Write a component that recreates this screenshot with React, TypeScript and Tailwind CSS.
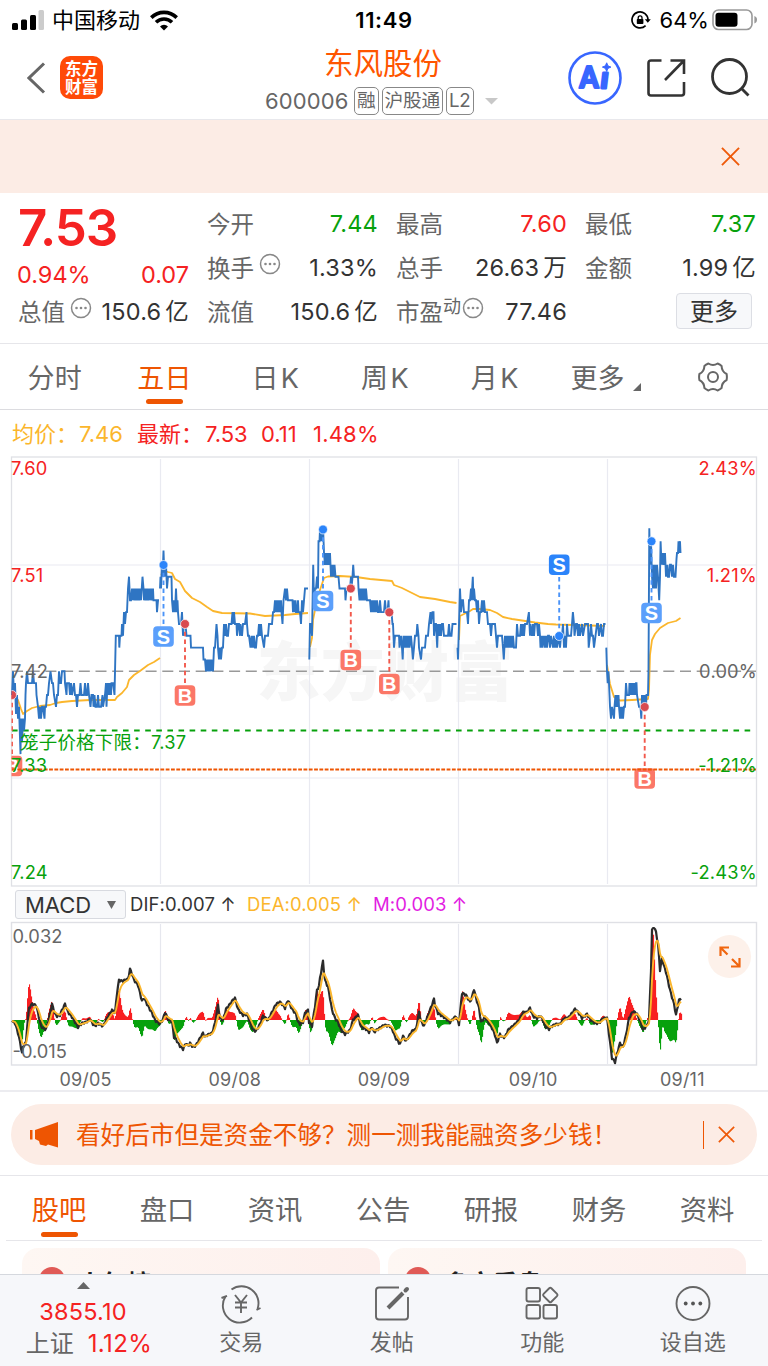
import React from 'react';

type Point = [number, number];

const GRID_X = [160.5, 309.5, 458.5, 607.5];
const BASE_Y = 671.3;
const CENT = 11.83;

// x,cents away from the 7.42 base, one string per trading day
const PRICE_DAYS = [
    '12,-2 13,0 14,-2 15,-1 16,-3.6 17,-2 18,-4 19,-3 20.5,-7 21,-4 22,-6 23,-4 24,-5 25,-4 25.5,-2 26,-1 27,0 28,-1 32,-1 33,0 34,-1 36,-1 36.5,-2 38,-3 39,-4 40,-3 41,-4 42,-3 43,-3 44.5,-4 45,-3 46,-3 47,-2 48,-2 49,-1 50.5,0 52,-1 53,-1 54,-2 56,-3 57,-2 58,-2 59,0 60,-1 61,-1 62,0 64.5,0 65,-1 66.5,-2 67,-1 69,-1 70,-2 71,-1 72,-2 74,-1 75,-2 76,-2 77,-3 78,-2 79.5,-2 80.5,-1 81.5,-2 84,-2 85,-1 86,-2 87,-2 88,-1 89,-2 90.5,-3 91.5,-2 93,-2 93.5,-3 94.5,-2 95.5,-3 97,-3 98,-2 99,-3 101,-3 102.5,-2 103,-3 105,-2 106,-1 106.5,-3 107,-2 108,-1 109,-2 110,-1 111,-2 111.5,-1 113,-1 114.5,-2 115.8,3 119,3 119.3,2 120,3 121.5,3 122,4 123,3 124,5 125,4 126,5 127,5 128,7 129,8 130,6 131,6 132,7 132.5,6 133,7 133.5,6 134.5,7 135,6 136,7 136.5,6 137.5,7 138,6 139,7 139.5,6 140.5,7 141,6 142.5,8 143.5,7 144,6 145,7 145.5,6 146.5,7 147,6 148,7 148.5,6 150,7 150.5,6 151.5,7 152,6 153,7 153.5,6 156.5,6 157,5 158,6 159,6',
    '160,7 160.5,8 161,7 161.5,8 162,9 162.5,8 163,9 163.5,10.2 164,9 164.5,8 166,9 166.5,8 167,7 168,8 171.5,8 172,6 173,5 174,6 175,5 176,7 177,5 177.5,6 178,5 179,4 181,4 182,5 183,3 184,4 185.5,4 186.5,3 190.5,3 191,2 203,2 203.5,1 205,1 206,0 207,1 208,0 208.5,1 209.5,0 210,1 211,0 211.5,1 213,0 213.5,1 214,2 215,2 216.5,4 217.5,3 218,2 219,1 220,2 221,1 222,2 223,2 224,4 225,3 226,4 227,3 228,3 229,4 230,4 231.5,4 232.5,5 233,4 234,5 235,4 236.5,4 237,3 238,4 239,4 240,3 240.5,4 242,3 243,4 245,4 246.5,5 247,4 248,3 249,3 250.5,2 251.5,3 252,2 252.5,3 253.5,2 254,3 255,2 256,2 257,3 258,3 259,4 260,3 261,4 262,3 264,2 265,3 268,3 269,4 272,4 273,5 274,5 275,6 275.5,5 276.5,6 277,5 278,6 278.5,5 279.5,6 280,5 281,6 281.5,5 282.5,4 283.5,6 285,7 286,6 287,7 288,6 292.5,6 293,5 294,6 294.5,5 295.5,6 296,5 297,5 298,6 298.5,5 300,5 301,4 302,6 303,5 304,6 305,7 308,7',
    '309.3,1 310,4 311,4 312,3 313.2,9 314,6 315,7 316,7 317,8 318,7 318.5,11 319.5,11 320,12 320.5,11 321.5,12 322,11 323,12.3 324,10 325,9 325.5,10 326.5,9 327,10 328,9 328.5,10 329.5,9 330,10 331,8 331.5,9 332.5,8 333,9 334,8 334.5,9 335.5,8 337,8 338.5,8 339.5,7 345,7 345.5,6 346.5,7 350,7 351,8 351.5,7 352.5,8 353.2,9 354,8 358,8 358.5,7 359.5,6 360,7 361,6 361.5,7 362.5,6 363,7 364,6 364.5,7 365.5,6 366,7 367,6 370,6 371,5 372,6 373,5 373.5,6 374.5,5 375,6 376,5 377,6 378,5 379,5 380,6 381,5 384,5 385,6 386,5 387.5,5 388.5,6 389,5 391.5,5 392.5,4 393,4 394,2 395,3 399,3 399.5,2 401,3 402,2 402.7,1 403.5,3 404,2 405,3 406,2 407,3 408,2 409,3 409.5,2 411,3 412,2 412.9,1 414,2 415,3 416.5,3 417.3,4 418.5,3 419,2 421,1 422,2 425,2 426,3 428,3 429,4 430.5,5 431,4 432.5,5 433.5,5 434,3 435,4 436,4 437.2,2 438,4 439,3 440,4 441,3 442,4 443,4 444,3 448,3 449,4 450,3 451.5,3 452.5,4 456.5,4',
    '457.5,2 458,1 459,4 460,7 461,5 462,6 463,6 464,5 467,5 468,4 469,6 470,6 471,7 471.5,6 472.8,8 473.5,6 474,7 475,6 476,6 477,5 478,6 479,4 480,5 481,5 482,6 483,5 484,6 485,5 486,5 487,5 488,4 490,4 491,3 492,4 495,4 496,3 497,2 498,3 502,3 503,2 503.8,1 505,3 506,2 507,3 508,2 509,3 510,2 511,3 512,2 513,3 514,2 516,2 517,4 518,3 520,3 521,4 522,3 523,4 524,3 525,4 527,4 528.9,5 530,3 530.5,4 532,3 533,4 534,3 535,4 537,4 538,3 539,4 540,3 540.5,2 542,3 542.5,2 544,3 545,2 546,3 547,2 548,3 549,3 550,2 551,3 553,2 554,3 555,2 556,3 557,2 559,3 560,2 561,3 562,3 563,4 564,2 565,3 566,2 567,4 568,3 571,3 572,4 572.9,5 574,4 574.5,3 576,4 577,4 578,3 579,4 580,3 582,4 583,3 585,4 588,4 588.7,2 590,3 591,4 592,3 593,3 594,2 595.5,3 597,4 598,4 599,3 601,4 602,3 603,3 604,4 605.5,4',
    '606.3,2 607,0 607.7,-1 608.5,0 609,-1 610,-3 611,-4 612,-3 614,-4 614.5,-3 615.5,-2 616,-3 617,-2 618,-3 618.5,-2 619,-3 620,-4 621,-3 621.5,-4 622.5,-3 623,-4 624,-3 625,-3 626,-1 627,-2 628,-2 629,-2 629.5,-1 630.5,-2 631,-1 632,-2 632.5,-1 633.5,-2 634,-1 635,-2 636,-1 636.5,-1 637,-2 639,-3 640.5,-3 641.3,-4 642,-2 643,-3 643.5,-2 644.5,-3 645,-2 646,-3 646.5,-2 648,-2 648.5,0 649.3,12.1 650,9 651,11 652,8 653,7 653.5,9 654.5,7 655,9 656,7 657,9 658,8 659.2,6 660,8 660.6,11 661.5,9 662,10 662.5,9 663.5,10 664,9 665,10 665.5,9 666,8 667.5,9 668,8 669,8 670,9 671,9 672,8 673,9 674,8 675.5,8 676.5,9.5 677,10 678,10 678.5,11 679,10 680,11 680.5,10',
];

const AVERAGE_DAYS = [
    '14,695 18,700 21,709 23,714 27,711 32,708 40,706 50,705 56,703 62,702 72,701 90,700 115,700 117,697 122,693 127,687 129,680 134,675 140,671 148,665 154,662 160,658',
    '161,575 165,571 168,572 172,573 175,579 180,582 185,591 192,598 200,602 207,607 213,611 222,613 250,613.5 265,616 285,615 295,614 308,613',
    '310,647 312,638 313,620 316,605 320,590 324,578 328,576.5 340,576 356,577 370,579 392,581 394,585 402,588 410,592 420,597 435,599 450,602 456.5,603',
    '459,640 460,616 464,614 470,611 473,609 480,609 490,610 497,613 503,617 512,619 522,620.5 535,622.5 548,624 556,624.5 575,625 605,626',
    '607,665 610,684 614,697 620,700.5 632,700 648,699 649,690 650,655 652,640 655,634 660,628 668,623 676,621 680.5,618',
];

const DIF =
    '12,1021 15,1023 18,1033 20,1042 22,1053 23,1047 26,1042 27,1028 29,1008 32,1004 36,1005 38,1013 41,1026 44,1029 46,1029 49,1018 52,1004 55,1014 57,1016 60,1015 62,1010 65,1004 68,1012 72,1017 75,1022 78,1027 82,1023 86,1022 90,1019 93,1024 95,1026 98,1023 103,1026 105,1022 107,1018 112,1010 115,1013 117,993 119,980 122,981 128,979 130,969 132,974 134,980 138,985 142,1001 144,998 148,1006 152,1013 155,1020 160,1024 163,1019 165,1012 168,1019 172,1021 174,1037 176,1039 178,1043 180,1046 183,1049 186,1043 188,1046 190,1043 193,1047 196,1045 200,1038 203,1033 205,1037 207,1035 212,1033 215,1023 218,1005 220,1018 223,1020 226,1009 230,1004 232,1001 235,998 238,1009 241,1013 243,1015 247,1014 251,1025 253,1030 256,1031 260,1024 263,1016 268,1020 272,1012 276,1004 280,1002 282,1004 285,1008 288,1000 292,1009 296,1014 298,1022 300,1024 303,1022 305,1013 308,1010 309,1022 312,1026 315,1006 317,990 319,986 320,978 323,961 324,972 325,980 328,987 330,998 332,1010 335,1018 338,1022 341,1030 345,1034 350,1030 353,1020 358,1015 361,1027 366,1029 369,1032 372,1027 374,1032 378,1029 384,1025 390,1026 393,1031 395,1037 400,1044 403,1036 406,1041 412,1031 416,1029 419,1012 421,1021 424,1026 427,1018 430,1010 434,999 435,1005 438,1013 444,1017 450,1022 456,1016 459,1024 461,1003 462,993 466,995 470,1002 472,997 474,989 476,998 479,1008 481,1022 485,1017 489,1023 492,1028 495,1035 497,1043 500,1034 502,1037 505,1037 508,1030 514,1025 519,1020 523,1012 527,1012 530,1008 533,1016 537,1018 540,1016 542,1018 545,1026 549,1029 552,1026 556,1024 560,1024 564,1018 568,1018 572,1013 575,1009 578,1012 582,1018 587,1014 590,1019 595,1023 599,1023 603,1018 607,1018 609,1034 612,1058 615,1062 618,1050 620,1043 623,1047 626,1035 629,1018 633,1011 637,1014 641,1023 643,1030 647,1025 649,1020 651,970 652,930 654,927 656,932 658,944 660,970 662,958 664,966 666,972 670,990 674,1004 676,1015 679,1000 681,999';

const parse = (s: string): Point[] => s.split(' ').map((p) => p.split(',').map(Number) as Point);

const pricePoints = (day: string) =>
    parse(day)
        .map(([x, c]) => `${x},${(BASE_Y - c * CENT).toFixed(1)}`)
        .join(' ');

const sampleLine = (points: Point[]): Point[] => {
    const out: Point[] = [];
    let i = 0;
    for (let x = points[0][0]; x <= points[points.length - 1][0]; x++) {
        while (i < points.length - 2 && points[i + 1][0] < x) i++;
        const [x0, y0] = points[i];
        const [x1, y1] = points[i + 1];
        out.push([x, y0 + ((y1 - y0) * (x - x0)) / (x1 - x0)]);
    }
    return out;
};

const difSamples = sampleLine(parse(DIF));
const deaSamples: Point[] = [];
difSamples.forEach(([x, y], i) => {
    const prev = i === 0 ? y : deaSamples[i - 1][1];
    deaSamples.push([x, prev + (y - prev) * 0.3]);
});

const rawBars = difSamples.map(([, y], i) => (y - deaSamples[i][1]) * 2.3);
const bars = rawBars.map((b, i) => Math.max(-92, ((rawBars[i - 1] ?? b) + b * 2 + (rawBars[i + 1] ?? b)) / 4));

const tradeMarkers = [
    { type: 'B', x: 12, dot: 695, box: 766, strong: false },
    { type: 'S', x: 163.5, dot: 565, box: 636.5, strong: false },
    { type: 'B', x: 185, dot: 624, box: 695.5, strong: false },
    { type: 'S', x: 323, dot: 529.5, box: 601, strong: false },
    { type: 'B', x: 350.8, dot: 588.5, box: 660, strong: false },
    { type: 'B', x: 389.3, dot: 612.3, box: 684, strong: false },
    { type: 'S', x: 559.2, dot: 636, box: 564.7, strong: true },
    { type: 'S', x: 651.5, dot: 541.3, box: 613, strong: false },
    { type: 'B', x: 644.7, dot: 707, box: 778.5, strong: false },
];

const FONT = "font-['Inter','Noto_Sans_CJK_SC',sans-serif]";

const StatusBar = () => (
    <div className="flex h-10 items-center justify-between pr-[10px] pl-3 text-black">
        <div className="flex w-[300px] items-center">
            <svg width="33" height="20" viewBox="0 0 33 20">
                <rect x="0" y="13" width="6" height="7" rx="1.5" />
                <rect x="9" y="9.5" width="6" height="10.5" rx="1.5" />
                <rect x="18" y="5" width="6" height="15" rx="1.5" />
                <rect x="26.5" y="0" width="5.5" height="20" rx="1.5" fill="#cccccc" />
            </svg>
            <span className="ml-[7px] text-[22px] leading-10">中国移动</span>
            <svg className="ml-[10px]" width="28" height="21" viewBox="0 0 28 21" fill="none" stroke="#000" strokeWidth="3.6">
                <path d="M1.3 7.6a18 18 0 0 1 25.4 0" />
                <path d="M6 12.3a11.4 11.4 0 0 1 16 0" />
                <path d="M14 20.6l-4-4.2a5.8 5.8 0 0 1 8 0z" fill="#000" stroke="none" />
            </svg>
        </div>
        <span className="mr-[2px] text-[22px] font-semibold tracking-[0.6px]">11:49</span>
        <div className="flex w-[300px] items-center justify-end">
            <svg width="20" height="18" viewBox="0 0 20 18" fill="none" stroke="#000" strokeWidth="1.7">
                <path d="M14.6 14.6A8 8 0 1 1 17 9" />
                <path d="M13.8 8.2h6l-3 3.6z" fill="#000" stroke="none" />
                <rect x="5.8" y="8" width="6.6" height="5" rx="0.8" fill="#000" stroke="none" />
                <path d="M7.2 8.5V6.8a1.9 1.9 0 0 1 3.8 0v1.7" strokeWidth="1.3" />
            </svg>
            <span className="mr-[3px] ml-[9px] text-[22px]">64%</span>
            <svg width="46" height="22" viewBox="0 0 46 22">
                <rect x="1" y="1" width="39" height="19.5" rx="5.5" fill="none" stroke="#999" strokeWidth="1.6" />
                <rect x="3.5" y="3.7" width="22" height="14" rx="3" />
                <path d="M42.4 7v7.4c2-.7 2.6-2.2 2.6-3.7s-.6-3-2.6-3.7z" fill="#999" />
            </svg>
        </div>
    </div>
);

const Tag = ({ children }: { children: React.ReactNode }) => (
    <span className="flex h-[28px] shrink-0 items-center rounded-[5px] border-[1.5px] border-[#888] px-[2px] text-[18.7px] leading-none tracking-[-0.2px] whitespace-nowrap text-[#666]">
        {children}
    </span>
);

const Header = () => (
    <header className="flex h-20 items-start border-b border-[#e8e8ec] pr-[18px] pl-[27px]">
        <svg className="mt-[22px] shrink-0" width="19" height="32" viewBox="0 0 19 32" fill="none" stroke="#666" strokeWidth="3">
            <path d="M17 1.5L2 16l15 14.5" />
        </svg>
        <div className="mt-4 ml-[14px] flex h-[43px] w-[43px] shrink-0 flex-col items-center justify-center rounded-[10px] bg-[#ff4a08] text-[16.5px] leading-[18px] font-bold text-white">
            <span>东方</span>
            <span>财富</span>
        </div>
        <div className="ml-[162px] flex w-[240px] shrink-0 flex-col">
            <div className="ml-[59px] h-[46px] text-[29.5px] leading-[46px] text-[#ff5500]">东风股份</div>
            <div className="flex items-center gap-[3px] text-[#666]">
                <span className="mr-[2px] w-[84px] shrink-0 text-[22px] leading-[30px] tracking-[0.1px]">600006</span>
                <Tag>融</Tag>
                <Tag>沪股通</Tag>
                <Tag>L2</Tag>
                <svg className="ml-2 shrink-0" width="14" height="7" viewBox="0 0 14 7" fill="#c8c8c8">
                    <path d="M0 0h13L6.5 6.5z" />
                </svg>
            </div>
        </div>
        <div className="ml-auto flex shrink-0 items-center pt-[11px]">
            <svg className="-ml-px" width="54" height="54" viewBox="0 0 54 54" fill="#3866ff">
                <circle cx="27" cy="27" r="25.5" fill="none" stroke="#3866ff" strokeWidth="2.6" />
                <text x="11.5" y="37" fontSize="30" fontFamily="Lato" fontWeight="900" stroke="#3866ff" strokeWidth="2.2" strokeLinejoin="round" textLength="19" lengthAdjust="spacingAndGlyphs">A</text>
                <text x="33" y="37" fontSize="29" fontFamily="Lato" fontWeight="900" fontStyle="italic" stroke="#3866ff" strokeWidth="2.8" strokeLinejoin="round">ı</text>
                <path d="M38.7 11.8l1.2 3 3 1.3-3 1.3-1.2 3-1.3-3-3-1.3 3-1.3z" stroke="#3866ff" strokeLinejoin="round" />
            </svg>
            <svg className="ml-[24px]" width="40" height="40" viewBox="0 0 40 40" fill="none" stroke="#333" strokeWidth="2.6">
                <path d="M15.5 2.5H5Q2.5 2.5 2.5 5v30q0 2.5 2.5 2.5h30.5q2.5 0 2.5-2.5V24" />
                <path d="M24.5 2.5H38v13.5M38 2.5L19 22" />
            </svg>
            <svg className="ml-[24px]" width="40" height="40" viewBox="0 0 40 40" fill="none" stroke="#333" strokeWidth="2.8">
                <circle cx="19.5" cy="18.5" r="17" />
                <path d="M31 30l7.5 7.5" />
            </svg>
        </div>
    </header>
);

const CloseIcon = ({ size }: { size: number }) => (
    <svg width={size} height={size} viewBox="0 0 20 20" fill="none" stroke="#ee5a0a" strokeWidth="2">
        <path d="M1 1l18 18M19 1L1 19" />
    </svg>
);

const Dots = () => (
    <svg className="mb-2 ml-[5px] shrink-0" width="22" height="22" viewBox="0 0 22 22" fill="#888">
        <circle cx="11" cy="11" r="9.5" fill="none" stroke="#888" strokeWidth="1.5" />
        <circle cx="6.5" cy="11" r="1.3" />
        <circle cx="11" cy="11" r="1.3" />
        <circle cx="15.5" cy="11" r="1.3" />
    </svg>
);

type FieldProps = { label: string; value: string; unit?: string; color?: string; dots?: boolean; sup?: string };

const Field = ({ label, value, unit, color = 'text-[#333]', dots, sup }: FieldProps) => (
    <div className="flex h-11 items-center text-[23.5px] leading-[44px] whitespace-nowrap">
        <span className="mt-[2px] text-[#666]">{label}</span>
        {sup && <span className="-mr-1 mb-[10px] text-[18px] leading-8 text-[#666]">{sup}</span>}
        {dots && <Dots />}
        <span className={`ml-auto tracking-[0.2px] ${color}`}>
            {value}
            {unit && <span className="ml-1">{unit}</span>}
        </span>
    </div>
);

const Quote = () => (
    <section className="grid h-[151px] grid-cols-4 gap-x-[18px] border-b border-[#e6e6ea] pt-[9px] pr-3 pl-[18px]">
        <div>
            <div className="h-[51px] text-[51px] leading-[51px] font-semibold tracking-[-1px] text-[#f52222]">7.53</div>
            <div className="-ml-px flex h-[37px] justify-between pt-[7px] text-[23.5px] leading-[30px] text-[#f52222]">
                <span>0.94%</span>
                <span>0.07</span>
            </div>
            <Field label="总值" value="150.6" unit="亿" dots />
        </div>
        <div>
            <Field label="今开" value="7.44" color="text-[#07a10c]" />
            <Field label="换手" value="1.33%" dots />
            <Field label="流值" value="150.6" unit="亿" />
        </div>
        <div>
            <Field label="最高" value="7.60" color="text-[#f52222]" />
            <Field label="总手" value="26.63" unit="万" />
            <Field label="市盈" value="77.46" sup="动" dots />
        </div>
        <div>
            <Field label="最低" value="7.37" color="text-[#07a10c]" />
            <Field label="金额" value="1.99" unit="亿" />
            <button className="mt-[3px] mr-1 ml-auto flex h-9 w-[76px] items-center justify-center rounded-[4px] border border-[#dcdee4] bg-[#f7f8fa] pt-[2px] text-[24px] text-[#333]">
                更多
            </button>
        </div>
    </section>
);

const PeriodTabs = () => {
    const tabs = ['分时', '五日', '日K', '周K', '月K'];
    return (
        <nav className="grid h-[66px] grid-cols-7 border-b border-[#dcdce0] text-[27px] leading-[70px] text-[#666]">
            {tabs.map((tab) => (
                <div key={tab} className={`relative h-[65px] text-center tracking-[0.3px] ${tab === '五日' ? 'text-[#ee5502]' : ''}`}>
                    {tab.endsWith('K') ? (
                        <span className="ml-[2px]">
                            {tab[0]}
                            <span className="ml-[2px]">K</span>
                        </span>
                    ) : (
                        tab
                    )}
                    {tab === '五日' && <i className="absolute bottom-[5px] left-[36px] h-[5px] w-[37px] rounded-full bg-[#ee5502]" />}
                </div>
            ))}
            <div className="flex h-[66px] items-center justify-center pt-[3px] pl-[5px]">
                更多
                <svg className="mt-4 ml-[9px]" width="8" height="8" viewBox="0 0 8 8" fill="#666">
                    <path d="M8 0v8H0z" />
                </svg>
            </div>
            <div className="flex h-[65px] items-center justify-center">
                <svg width="30" height="30" viewBox="0 0 30 30" fill="none" stroke="#666" strokeWidth="2" strokeLinejoin="round">
                    <path d="M10.4 1.5Q15 4.5 19.6 1.5Q22.2 2.6 23.6 3.9Q23.7 9.4 28.6 12Q29.2 15 28.6 18Q23.7 20.6 23.6 26.1Q22.2 27.4 19.6 28.5Q15 25.5 10.4 28.5Q7.8 27.4 6.4 26.1Q6.3 20.6 1.4 18Q.8 15 1.4 12Q6.3 9.4 6.4 3.9Q7.8 2.6 10.4 1.5z" />
                    <circle cx="15" cy="15" r="5" />
                </svg>
            </div>
        </nav>
    );
};

const PriceChart = () => (
    <svg className={`block ${FONT}`} width="768" height="432" viewBox="0 456 768 432" fontSize="18.3" letterSpacing="0.2">
        <defs>
            <clipPath id="plot">
                <rect x="11.5" y="457" width="745" height="429" />
            </clipPath>
        </defs>
        <text x="385" y="695" fontSize="64" fontWeight="900" fill="#f6f6f6" textAnchor="middle">东方财富</text>
        <g stroke="#e9eaf1" strokeWidth="1.2">
            {GRID_X.map((x) => (
                <line key={x} x1={x} x2={x} y1="459" y2="884" />
            ))}
            <line x1="12" x2="756" y1="565" y2="565" />
            <line x1="12" x2="756" y1="778" y2="778" />
        </g>
        <rect x="11.5" y="457" width="745" height="429" fill="none" stroke="#dfe0e5" strokeWidth="1.3" />
        <line x1="12" x2="756" y1="671.3" y2="671.3" stroke="#999" strokeWidth="1.5" strokeDasharray="11 5.7" />
        <line x1="12" x2="753" y1="730.5" y2="730.5" stroke="#07a10c" strokeWidth="2" strokeDasharray="5.6 5.5" />
        <g fill="none">
            {AVERAGE_DAYS.map((day, i) => (
                <polyline key={i} points={day} stroke="#fbb62c" strokeWidth="1.8" strokeLinejoin="round" />
            ))}
            {PRICE_DAYS.map((day, i) => (
                <polyline key={i} points={pricePoints(day)} stroke="#2f75c3" strokeWidth="1.9" />
            ))}
        </g>
        <g clipPath="url(#plot)" letterSpacing="0">
            {tradeMarkers.map((m) => {
                const isSell = m.type === 'S';
                const color = isSell ? (m.strong ? '#2b84fa' : '#5b9ffb') : '#fb7767';
                return (
                    <g key={m.x}>
                        <line
                            x1={m.x}
                            x2={m.x}
                            y1={m.dot}
                            y2={m.box}
                            stroke={isSell ? '#4a93f8' : '#f2594c'}
                            strokeWidth="1.9"
                            strokeDasharray="4.5 3.3"
                        />
                        <circle cx={m.x} cy={m.dot} r="4.5" fill={isSell ? '#2b84fa' : '#d94a50'} stroke="#ffffff" strokeOpacity="0.7" />
                        <rect x={m.x - 10.3} y={m.box - 10.3} width="20.6" height="20.6" rx="4" fill={color} />
                        <text x={m.x} y={m.box + 7} textAnchor="middle" fontSize="20" fontWeight="700" fill="#fff" fontFamily="Liberation Sans">{m.type}</text>
                    </g>
                );
            })}
        </g>
        <line x1="12" x2="756" y1="769.5" y2="769.5" stroke="#ee5502" strokeWidth="1.8" strokeDasharray="3.8 1.5" />
        <g fill="#f52222">
            <text x="11" y="474.5">7.60</text>
            <text x="11" y="582">7.51</text>
            <text x="757" y="474.5" textAnchor="end">2.43%</text>
            <text x="757" y="582" textAnchor="end">1.21%</text>
        </g>
        <g fill="#666">
            <text x="11" y="677.5">7.42</text>
            <text x="757" y="677.5" textAnchor="end">0.00%</text>
        </g>
        <g fill="#07a10c">
            <text x="20" y="749" fontSize="18.5">笼子价格下限：</text>
            <text x="151" y="749">7.37</text>
            <text x="11" y="771.5">7.33</text>
            <text x="11" y="879">7.24</text>
            <text x="757" y="771.5" textAnchor="end">-1.21%</text>
            <text x="757" y="879" textAnchor="end">-2.43%</text>
        </g>
    </svg>
);

const MacdChart = () => (
    <div className="relative">
        <svg className={`block ${FONT}`} width="768" height="146" viewBox="0 921 768 146" fontSize="18.3">
            <g stroke="#e6e7ee" strokeWidth="1.2">
                {GRID_X.map((x) => (
                    <line key={x} x1={x} x2={x} y1="924" y2="1064" />
                ))}
            </g>
            <rect x="11.5" y="922.5" width="745" height="142.5" fill="none" stroke="#dfe0e5" strokeWidth="1.4" />
            {bars.map((bar, i) => (
                <rect
                    key={i}
                    x={difSamples[i][0]}
                    y={bar < 0 ? 1020 + bar : 1020}
                    width="1.1"
                    height={Math.max(Math.abs(bar), 0.8)}
                    fill={bar < 0 ? '#f81f22' : '#07a10c'}
                />
            ))}
            <g fill="none" strokeLinejoin="round">
                <polyline points={difSamples.map((p, i) => `${p[0]},${p[1] + (i % 3 === 0 ? 1.2 : -0.5)}`).join(' ')} stroke="#2b2b2b" strokeWidth="2.2" />
                <polyline points={deaSamples.map((p) => p.join(',')).join(' ')} stroke="#fbb62c" strokeWidth="1.9" />
            </g>
            <text x="12.5" y="943" fill="#666">0.032</text>
            <text x="12.5" y="1058" fill="#666">-0.015</text>
        </svg>
        <button className="absolute top-[14px] right-[17px] flex h-[43px] w-[43px] items-center justify-center rounded-full bg-[#fdf1ea]">
            <svg width="22" height="22" viewBox="0 0 22 22" fill="none" stroke="#f0660f" strokeWidth="2.2">
                <path d="M1.5 10V1.5H10M1.5 1.5l7 7" />
                <path d="M20.5 12v8.500H12M20.5 20.5l-7.5-7.5" />
            </svg>
        </button>
    </div>
);

const ChartSection = () => (
    <section className="h-[682px] border-b-2 border-[#ececf0]">
        <div className="flex h-[46px] items-center pt-[2px] pl-3 text-[22px] whitespace-pre text-[#f52222]">
            <span className="w-[67px] text-[#fbb62c]">均价：</span>
            <span className="w-[58px] text-[#fbb62c]">7.46</span>
            <span className="w-[68px]">最新：</span>
            <span className="w-[56px]">7.53</span>
            <span className="w-[52px]">0.11</span>
            <span className="tracking-[0.2px]">1.48%</span>
        </div>
        <PriceChart />
        <div className="flex h-[33px] items-center pl-[15px] text-[18.5px] leading-none whitespace-nowrap">
            <button className="flex h-[29px] w-[111px] items-center justify-between rounded-[3px] border border-[#d8dae0] bg-[#f7f8fa] pr-[9px] pl-[9px] text-[22px] text-[#333]">
                MACD
                <svg width="9" height="8" viewBox="0 0 9 8" fill="#666">
                    <path d="M0 0h9L4.5 8z" />
                </svg>
            </button>
            <span className="ml-[4px] w-[117px] tracking-[0.1px] text-[#333]">DIF:0.007 ↑</span>
            <span className="w-[126px] tracking-[0.1px] text-[#fbb62c]">DEA:0.005 ↑</span>
            <span className="tracking-[0.1px] text-[#e21de2]">M:0.003 ↑</span>
        </div>
        <MacdChart />
        <div className="flex h-6 pl-[11px] text-[18px] leading-[25px] tracking-[0.2px] text-[#666]">
            {['09/05', '09/08', '09/09', '09/10', '09/11'].map((d) => (
                <span key={d} className="w-[149.2px] text-center">{d}</span>
            ))}
        </div>
    </section>
);

const LoanBanner = () => (
    <section className="h-[84px] border-b border-[#e6e6ea] px-[11px] pt-3">
        <div className="flex h-[61px] items-center rounded-full bg-[#fcece5] pr-[22px] pl-[18px] text-[#ee5502]">
            <svg className="shrink-0" width="30" height="26" viewBox="0 0 30 26" fill="#ee5502">
                <path d="M1 8h2.5v9.5H1zM6 8L29 0v25.5l-10-3-2 1.500-6-1.500-1-3.500-4-2z" />
            </svg>
            <span className="ml-[17px] text-[24.6px] leading-[60px] whitespace-nowrap">看好后市但是资金不够？测一测我能融资多少钱！</span>
            <span className="mr-[14px] ml-auto h-7 w-[1.5px] shrink-0 bg-[#ee5502]" />
            <CloseIcon size={17} />
        </div>
    </section>
);

const InfoTabs = () => (
    <nav className="mx-[6px] flex h-[65px] border-b border-[#e6e6ea] text-[27.3px] leading-[69px] text-[#666]">
        {['股吧', '盘口', '资讯', '公告', '研报', '财务', '资料'].map((tab, i) => (
            <div key={tab} className={`relative flex-1 -translate-x-px text-center ${i === 0 ? 'text-[#ee5502]' : ''}`}>
                {tab}
                {i === 0 && <i className="absolute bottom-[3px] left-[36px] h-[5px] w-[37px] rounded-full bg-[#ee5502]" />}
            </div>
        ))}
    </nav>
);

const Cards = () => (
    <section className="flex h-[33px] gap-2 overflow-hidden pt-[7px] pl-[22px]">
        {['人气榜', '多空看盘'].map((title) => (
            <div key={title} className="flex h-[60px] w-[358px] shrink-0 items-start rounded-2xl bg-linear-to-r from-[#fef7f3] to-[#fdefec] pl-[17px]">
                <span className="mt-[19px] h-[26px] w-[26px] rounded-full bg-[#e05a56]" />
                <span className="mt-[22px] ml-[13px] text-[24.5px] leading-[28px] font-bold text-[#222]">{title}</span>
            </div>
        ))}
    </section>
);

const BottomBar = () => {
    const actions = [
        {
            label: '交易',
            icon: (
                <>
                    <path d="M10.5 5.500A17 17 0 0 1 36.5 25M31 33.5A17 17 0 0 1 4.5 12.5M.5 14l5.5-2.2M39.5 24l-4 2" />
                    <path d="M14 11l6 7.5 6-7.5M14 18.5h12M14 23.5h12M20 18.5v10.5" />
                </>
            ),
        },
        {
            label: '发帖',
            icon: (
                <>
                    <path d="M27 3.5H7Q4 3.5 4 6.5v26q0 3 3 3h26q3 0 3-3V13" />
                    <path d="M16 24L31 9" strokeWidth="4" />
                    <path d="M33.5 6.5l1.5-1.5" strokeWidth="4" strokeLinecap="round" />
                </>
            ),
        },
        {
            label: '功能',
            icon: (
                <>
                    <rect x="4.5" y="4" width="13.5" height="13.5" rx="2" />
                    <rect x="4.5" y="21" width="13.5" height="13.5" rx="2" />
                    <rect x="21.5" y="21" width="13.5" height="13.5" rx="2" />
                    <rect x="22.8" y="5.5" width="11" height="11" rx="1.5" transform="rotate(45 28.3 11)" />
                </>
            ),
        },
        {
            label: '设自选',
            icon: (
                <>
                    <circle cx="20" cy="19.5" r="16.5" />
                    <g fill="#555" stroke="none">
                        <circle cx="12.7" cy="19.5" r="1.9" />
                        <circle cx="20" cy="19.5" r="1.9" />
                        <circle cx="27.3" cy="19.5" r="1.9" />
                    </g>
                </>
            ),
        },
    ];

    return (
        <footer className="flex h-[92px] border-t border-[#d5d8de] bg-[#f6f7fa] text-[#666]">
            <div className="flex w-[166px] flex-col items-center pt-[7px]">
                <svg width="13" height="7" viewBox="0 0 13 7" fill="#666">
                    <path d="M6.5 0L13 7H0z" />
                </svg>
                <span className="mt-[7px] text-[23.5px] leading-[31px] tracking-[0.2px] text-[#f52222]">3855.10</span>
                <span className="ml-3 text-[24px] leading-[34px] whitespace-nowrap">
                    上证<span className="ml-[14px] tracking-[0.4px] text-[#f52222]">1.12%</span>
                </span>
            </div>
            {actions.map((action) => (
                <div key={action.label} className="flex flex-1 flex-col items-center pt-[9px]">
                    <svg width="40" height="40" viewBox="0 0 40 40" fill="none" stroke="#666" strokeWidth="1.9">
                        {action.icon}
                    </svg>
                    <span className="text-[22px] leading-[36px]">{action.label}</span>
                </div>
            ))}
        </footer>
    );
};

const App = () => (
    <div className={`h-[1366px] w-[768px] overflow-hidden bg-white ${FONT}`}>
        <StatusBar />
        <Header />
        <div className="flex h-[73px] items-center justify-end bg-[#fcece5] pr-7">
            <CloseIcon size={19} />
        </div>
        <Quote />
        <PeriodTabs />
        <ChartSection />
        <LoanBanner />
        <InfoTabs />
        <Cards />
        <BottomBar />
    </div>
);

export default App;
